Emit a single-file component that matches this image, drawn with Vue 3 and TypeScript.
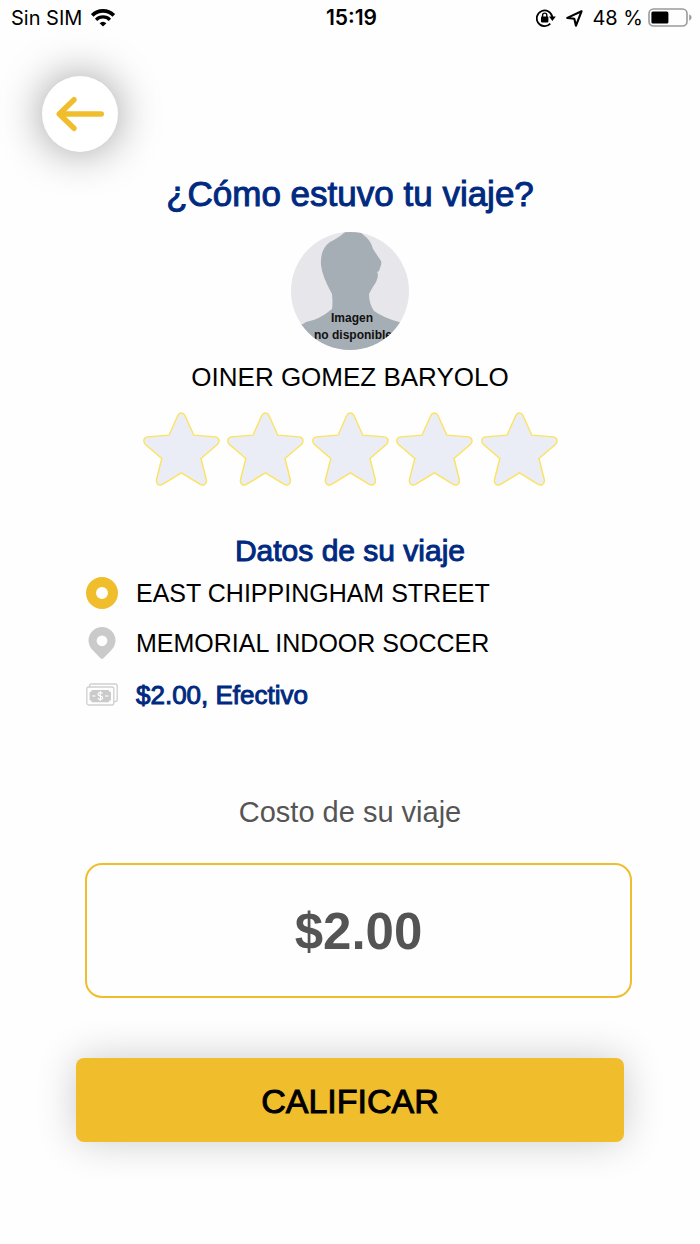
<script setup lang="ts">
import { ref } from 'vue'

const stars: number[] = [1, 2, 3, 4, 5]
const rating = ref<number>(0)
</script>

<template>
  <div class="screen">
    <header class="status">
      <div class="group left">
        <span>Sin SIM</span>
        <svg class="wifi" viewBox="0 0 24 18" aria-hidden="true">
          <path d="M1.2 6.4 A15.3 15.3 0 0 1 22.8 6.4" fill="none" stroke="#000" stroke-width="3.8" />
          <path d="M5.1 10.8 A9.8 9.8 0 0 1 18.9 10.8" fill="none" stroke="#000" stroke-width="3.3" />
          <path d="M8.6 14.3 Q12 11.2 15.4 14.3 L12 17.6 Z" />
        </svg>
      </div>
      <strong class="clock">15:19</strong>
      <div class="group right">
        <svg class="lock" viewBox="0 0 20 18" aria-hidden="true">
          <path d="M14.3 14.6 A7.8 7.8 0 1 1 16.3 8.2" fill="none" stroke="#000" stroke-width="1.8" />
          <path d="M13 7.6 H19.8 L16.4 12 Z" />
          <rect x="5" y="7.6" width="7.4" height="5.8" rx="0.8" />
          <path d="M6.6 8 V6.2 A2.1 2.1 0 0 1 10.8 6.2 V8" fill="none" stroke="#000" stroke-width="1.4" />
        </svg>
        <svg class="locate" viewBox="0 0 16 16" aria-hidden="true">
          <path d="M14.6 1.2 L1.2 7.4 L7.8 8.2 L9.4 14.8 Z" fill="none" stroke="#000" stroke-width="2" stroke-linejoin="round" />
        </svg>
        <span>48 %</span>
        <svg class="battery" viewBox="0 0 44 20" aria-hidden="true">
          <rect x="1" y="1" width="38" height="17" rx="4.5" fill="none" stroke="#9a9a9a" stroke-width="1.6" />
          <rect x="3.4" y="3.4" width="17" height="12.2" rx="1.5" />
          <path d="M41.2 6.2 Q43.6 7.4 43.6 9.5 Q43.6 11.6 41.2 12.8 Z" fill="#9a9a9a" />
        </svg>
      </div>
    </header>

    <button class="back" type="button" aria-label="Volver">
      <svg viewBox="0 0 76 76" aria-hidden="true">
        <path d="M59.3 38 H18 M32 23.7 L17.2 38 L32 52.3" fill="none" stroke="#f0be2d" stroke-width="5.4" stroke-linecap="round" stroke-linejoin="round" />
      </svg>
    </button>

    <main>
      <h1 class="medium">¿Cómo estuvo tu viaje?</h1>

      <svg class="avatar" viewBox="0 0 118 118" role="img" aria-label="Imagen no disponible">
        <defs>
          <clipPath id="round"><circle cx="59" cy="59" r="59" /></clipPath>
        </defs>
        <g clip-path="url(#round)">
          <rect width="118" height="118" fill="#e6e6eb" />
          <path fill="#a5adb5" d="M54 0 H69 L76 6 Q80 10 82 17 L90 29 Q91 32 89 36 L88 39 Q85 40 87 42 Q87 46 85 50 Q81 56 78 62 Q78 72 83 79 Q93 86 108 90 L118 93 V118 H0 V94 L12 92 L15 90 Q28 88 41 77 Q42 72 41 62 Q31 44 30 33 Q29 17 39 10 Q49 5 54 0 Z" />
          <text x="61" y="90" text-anchor="middle">Imagen</text>
          <text x="62" y="107" text-anchor="middle">no disponible</text>
        </g>
      </svg>

      <p class="driver">OINER GOMEZ BARYOLO</p>

      <div class="rating" role="radiogroup" aria-label="Calificación">
        <label v-for="n in stars" :key="n" class="star" :class="{ on: n <= rating }">
          <input v-model="rating" type="radio" name="rating" :value="n" :aria-label="String(n)" />
          <svg viewBox="0 0 77 75" aria-hidden="true">
            <path d="M34.9 3.2 Q36 1 38.4 1 Q40.8 1 41.9 3.2 L50.8 23.2 L72.4 24.9 Q75.4 25.3 76 28 Q76.3 30.3 74.6 32.2 L58 46.4 L63.4 68 Q63.8 71 61.6 72.6 Q59.4 73.6 57.2 72.4 L38.4 60.8 L19.6 72.4 Q17.4 73.6 15.2 72.6 Q13 71 13.4 68 L18.8 46.4 L2.2 32.2 Q0.5 30.3 0.9 28 Q1.4 25.3 4.4 24.9 L26 23.2 Z" />
          </svg>
        </label>
      </div>

      <h2 class="medium">Datos de su viaje</h2>
      <ul class="trip">
        <li>
          <svg viewBox="0 0 32 32" aria-hidden="true"><circle cx="16" cy="16" r="11" fill="none" stroke="#f0be2d" stroke-width="10" /></svg>
          <span>EAST CHIPPINGHAM STREET</span>
        </li>
        <li>
          <svg viewBox="0 0 32 32" aria-hidden="true">
            <path fill="#cacaca" fill-rule="evenodd" d="M16 0 A13.5 13.5 0 0 1 29.5 13.5 Q29.5 19 25 23.5 L17.2 31.4 Q16 32.2 14.8 31.4 L7 23.5 Q2.5 19 2.5 13.5 A13.5 13.5 0 0 1 16 0 Z M16 8.4 A5.4 5.4 0 1 0 16 19.2 A5.4 5.4 0 1 0 16 8.4 Z" />
          </svg>
          <span>MEMORIAL INDOOR SOCCER</span>
        </li>
        <li class="payment medium">
          <svg viewBox="0 0 32 32" aria-hidden="true">
            <g fill="none" stroke="#cfcfcf" stroke-width="1.3">
              <path d="M3.5 8 V7 Q3.5 5 5.5 5 H29 Q31.2 5 31.2 7 V20.5 Q31.2 22.6 29 22.6 H28" />
              <rect x="0.8" y="8" width="27" height="18" rx="2" />
            </g>
            <path fill="#cacaca" d="M6 11 H22.6 Q23 12.8 25 13.2 V21 Q23 21.4 22.6 23.2 H6 Q5.6 21.4 3.6 21 V13.2 Q5.6 12.8 6 11 Z" />
            <path d="M6 17 H9.6 M19 17 H22.6 M14.3 12 V22 M16.6 14.6 Q15.6 13.5 14.2 13.5 Q12 13.6 12 15.3 Q12.2 16.7 14.3 17 Q16.7 17.3 16.7 18.9 Q16.6 20.5 14.3 20.5 Q12.7 20.5 11.8 19.3" fill="none" stroke="#fff" stroke-width="1.1" />
          </svg>
          <span>$2.00, Efectivo</span>
        </li>
      </ul>

      <p class="cost-label">Costo de su viaje</p>
      <div class="cost">$2.00</div>
      <button class="submit medium" type="button">CALIFICAR</button>
    </main>
  </div>
</template>

<style>
body {
  margin: 0;
  background: #fefefe;
}
</style>

<style scoped>
.screen {
  font-family: "Liberation Sans", Arial, sans-serif;
  color: #000;
  overflow: hidden;
  padding-bottom: 100px;
}
.medium {
  font-weight: 400;
  -webkit-text-stroke: 1px currentColor;
}
.status {
  display: grid;
  grid-template-columns: 1fr auto 1fr;
  align-items: center;
  height: 36px;
  padding: 0 8px 0 11px;
  font: 20px/36px Inter, sans-serif;
}
.group {
  display: flex;
  align-items: center;
}
.right {
  justify-content: flex-end;
}
.clock {
  font-size: 21px;
  font-weight: 600;
}
.wifi {
  width: 24px;
  height: 18px;
  margin-left: 9px;
}
.lock {
  width: 20px;
  height: 18px;
  margin-right: 10px;
}
.locate {
  width: 17px;
  height: 17px;
  margin-right: 9px;
}
.battery {
  width: 44px;
  height: 20px;
  margin-left: 5px;
}
.back {
  display: block;
  width: 76px;
  height: 76px;
  margin: 40px 0 0 42px;
  padding: 0;
  border: 0;
  border-radius: 50%;
  background: #fff;
  box-shadow: 0 0 44px rgba(0, 0, 0, 0.4);
}
.back svg {
  display: block;
}
main {
  display: flex;
  flex-direction: column;
  align-items: center;
}
h1 {
  margin: 22px 0 18px;
  font-size: 35px;
  line-height: 40px;
  color: #002a80;
}
.avatar {
  width: 118px;
  height: 118px;
}
.avatar text {
  font: bold 12px "Liberation Sans", Arial, sans-serif;
  fill: #111;
}
.driver {
  margin: 12px 0 20px;
  font-size: 26px;
  line-height: 30px;
}
.rating {
  display: flex;
  justify-content: space-between;
  width: 415px;
}
.star {
  position: relative;
  width: 77px;
  height: 75px;
  cursor: pointer;
}
.star input {
  position: absolute;
  inset: 0;
  width: 100%;
  height: 100%;
  margin: 0;
  opacity: 0;
}
.star svg {
  display: block;
  fill: #eaedf5;
  stroke: #fbe260;
  stroke-width: 1.4;
}
.star.on svg {
  fill: #f0be2d;
}
h2 {
  margin: 48px 0 10px;
  font-size: 30px;
  line-height: 32px;
  color: #002a80;
}
.trip {
  align-self: stretch;
  margin: 0 68px 0 86px;
  padding: 0;
  list-style: none;
  font-size: 25px;
}
.trip li {
  display: flex;
  align-items: center;
  gap: 18px;
  line-height: 32px;
  margin-bottom: 18px;
}
.trip svg {
  flex: none;
  width: 32px;
  height: 32px;
}
.trip .payment {
  margin: 20px 0 0;
  font-size: 26px;
  color: #002a80;
}
.cost-label {
  margin: 84px 0 34px;
  font-size: 29px;
  line-height: 34px;
  color: #555;
}
.cost {
  align-self: stretch;
  margin: 0 68px 60px 85px;
  padding-top: 3px;
  border: 2px solid #f0be2d;
  border-radius: 17px;
  text-align: center;
  font-size: 51px;
  font-weight: 700;
  line-height: 128px;
  color: #545454;
}
.submit {
  align-self: stretch;
  margin: 0 76px;
  height: 84px;
  padding: 2px 0 0;
  border: 0;
  border-radius: 8px;
  background: #f0be2d;
  color: #000;
  font-family: inherit;
  font-size: 34px;
  box-shadow: 0 0 40px rgba(0, 0, 0, 0.2);
}
</style>
